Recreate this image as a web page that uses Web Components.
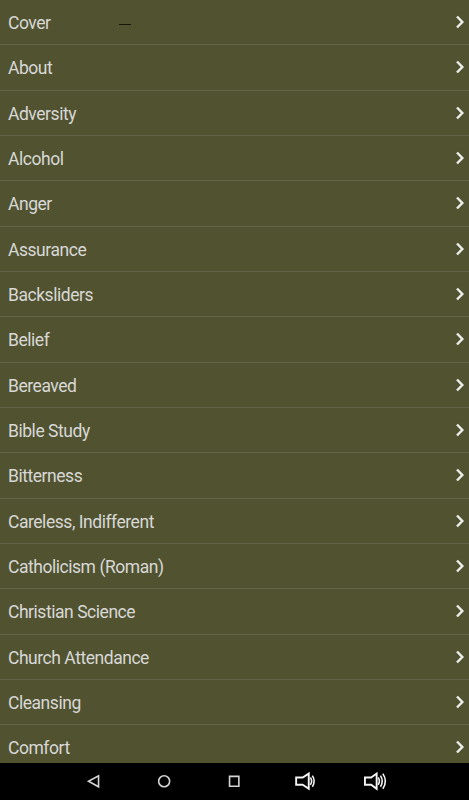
<!DOCTYPE html>
<html lang="en">
<head>
<meta charset="utf-8">
<title>Topics</title>
<style>
  html, body {
    margin: 0;
    height: 100%;
    overflow: hidden;
    background: #000;
    font-family: Roboto, "Liberation Sans", sans-serif;
  }
</style>
</head>
<body>
<topic-screen></topic-screen>

<script>
const topics = [
  'Cover', 'About', 'Adversity', 'Alcohol', 'Anger', 'Assurance',
  'Backsliders', 'Belief', 'Bereaved', 'Bible Study', 'Bitterness',
  'Careless, Indifferent', 'Catholicism (Roman)', 'Christian Science',
  'Church Attendance', 'Cleansing', 'Comfort'
];

// One row of the list
class TopicRow extends HTMLElement {
  constructor() {
    super();
    this.attachShadow({ mode: 'open' });
    this.shadowRoot.innerHTML = `
      <style>
        :host {
          display: flex;
          flex: none;
          align-items: center;
          justify-content: space-between;
          box-sizing: border-box;
          height: 45.33px;
          padding: 2px 4px 0 8px;
          border-bottom: 1px solid #63644a;
          color: #d8d8d6;
          font-size: 17.5px;
          letter-spacing: -0.46px;
          line-height: 20px;
          white-space: nowrap;
        }
        svg { display: block; margin-top: -2px; }
      </style>
      <slot></slot>
      <svg width="10" height="14" viewBox="0 0 10 14" fill="none" stroke="#ebebe8" stroke-width="2.5">
        <path d="M2 1.5 7.3 7 2 12.5"/>
      </svg>
    `;
  }
}
customElements.define('topic-row', TopicRow);

// Scrolling list, cut off by the navigation bar
class TopicList extends HTMLElement {
  constructor() {
    super();
    this.attachShadow({ mode: 'open' });
    this.shadowRoot.innerHTML = `
      <style>
        :host {
          display: flex;
          flex-direction: column;
          flex: 1;
          min-height: 0;
          overflow: hidden;
          position: relative;
          background: #505230;
        }
        .dash {
          position: absolute;
          left: 119px;
          top: 24px;
          width: 12px;
          height: 1px;
          background: #15150c;
        }
      </style>
      <slot></slot>
      <div class="dash"></div>
    `;
  }

  connectedCallback() {
    topics.forEach(name => {
      const row = document.createElement('topic-row');
      row.textContent = name;
      this.appendChild(row);
    });
  }
}
customElements.define('topic-list', TopicList);

// Android navigation bar
class NavBar extends HTMLElement {
  constructor() {
    super();
    this.attachShadow({ mode: 'open' });
    this.shadowRoot.innerHTML = `
      <style>
        :host {
          display: flex;
          flex: none;
          align-items: center;
          justify-content: center;
          height: 37px;
          background: #000;
        }
        svg {
          display: block;
          flex: none;
          width: 70.3px;
          height: 37px;
          fill: none;
          stroke: #d4d4d4;
          stroke-width: 1.6;
        }
        .volume {
          stroke: #f4f4f4;
          stroke-width: 1.9;
        }
        .waves { stroke-width: 1.6; }
      </style>
      <svg viewBox="-35 0 70 37"><path d="M-5.6 18.3 4.4 12.8V23.8z"/></svg>
      <svg viewBox="-35 0 70 37"><circle cx="0" cy="18.2" r="5.5"/></svg>
      <svg viewBox="-35 0 70 37"><path d="M-4.6 13.4H4.7V23.2H-4.6z"/></svg>
      <svg class="volume" viewBox="-35 0 70 37">
        <path d="M-9 14.5h6.5L3.6 10.6v15.2L-2.5 21.7H-9z"/>
        <path class="waves" d="M5.2 14.5q2.6 3.7 0 7.4M7.2 12.6q3.6 5.6 0 11.2"/>
      </svg>
      <svg class="volume" viewBox="-35 0 70 37">
        <path d="M-10.2 14.5h6.2L1.5 10.6v15.2L-4 21.7h-6.2z"/>
        <path class="waves" d="M3 14.5q2.6 3.7 0 7.4M5.3 12.6q3.6 5.6 0 11.2M7.7 10.6q5 7.6 0 15.2"/>
      </svg>
    `;
  }
}
customElements.define('nav-bar', NavBar);

class TopicScreen extends HTMLElement {
  constructor() {
    super();
    this.attachShadow({ mode: 'open' });
    this.shadowRoot.innerHTML = `
      <style>
        :host {
          display: flex;
          flex-direction: column;
          height: 100vh;
        }
      </style>
      <topic-list></topic-list>
      <nav-bar></nav-bar>
    `;
  }
}
customElements.define('topic-screen', TopicScreen);
</script>
</body>
</html>
